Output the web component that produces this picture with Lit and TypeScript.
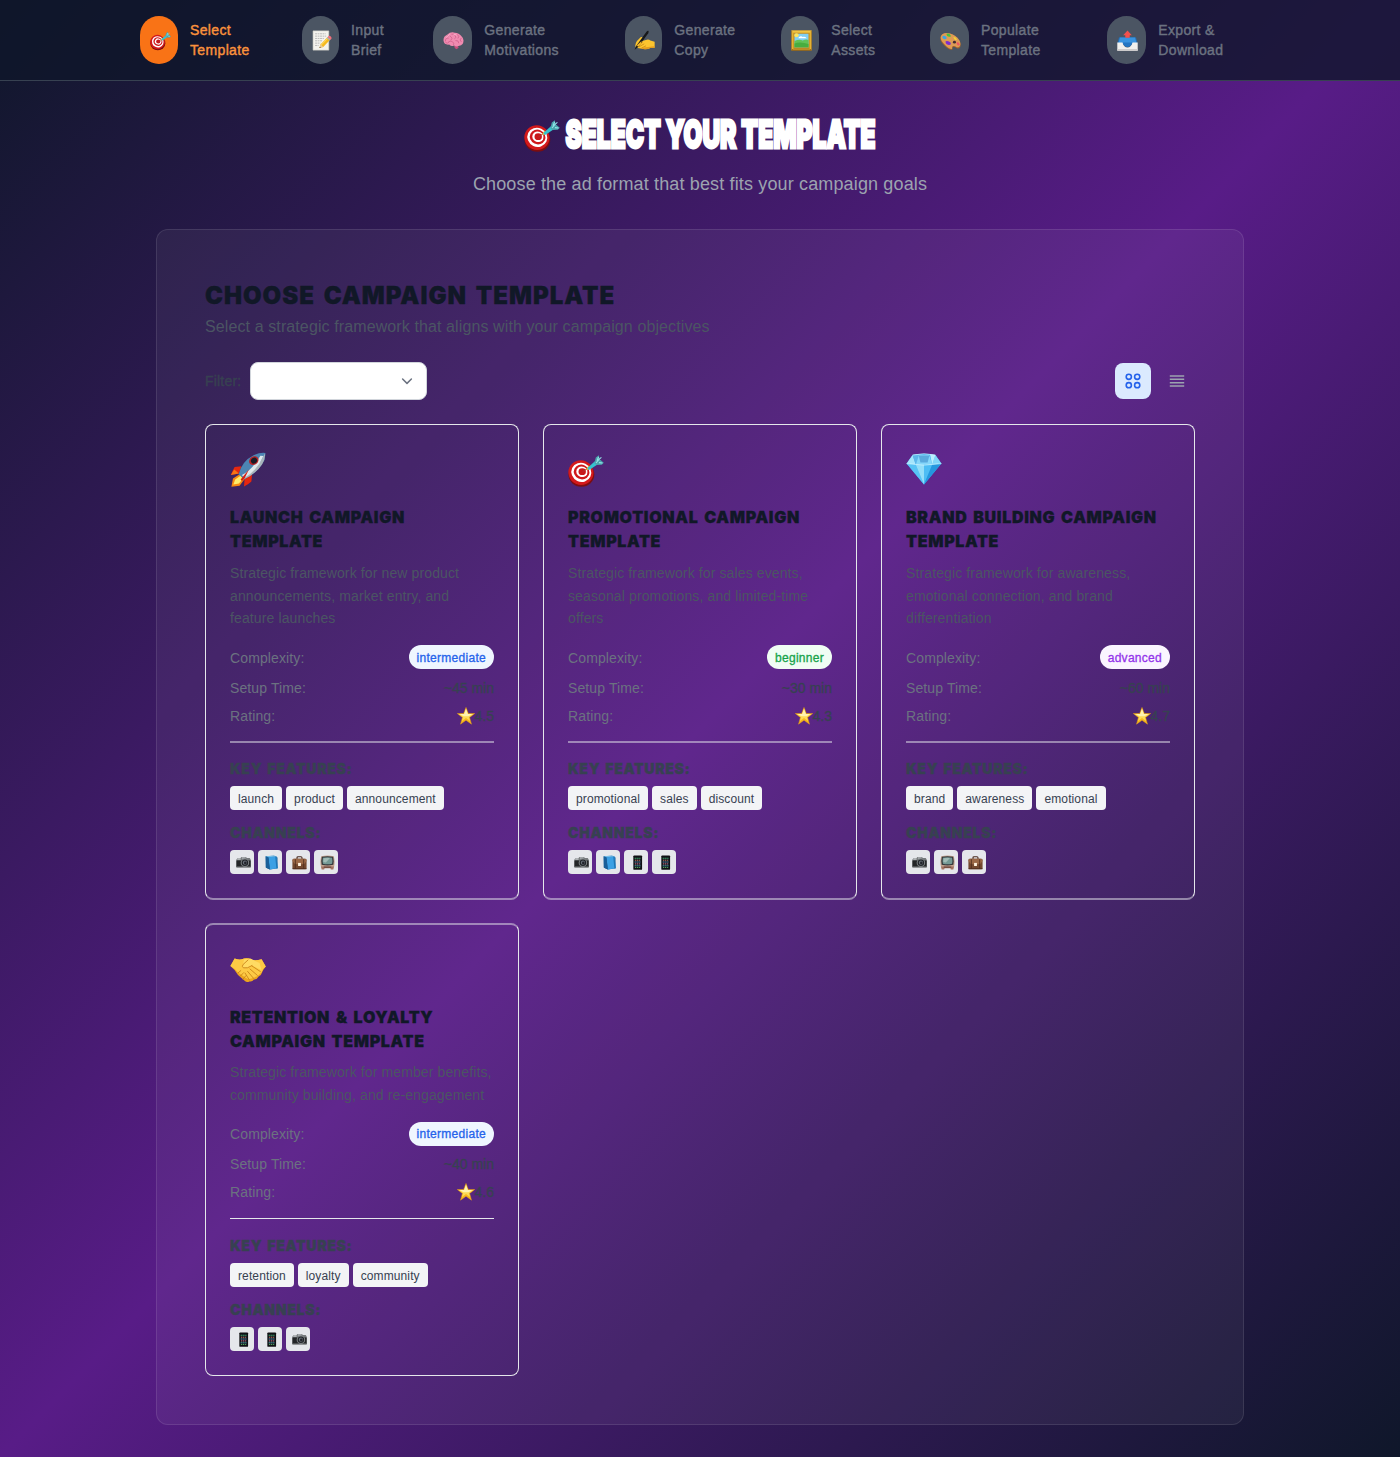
import { LitElement, html, css, svg } from "lit";
import { customElement } from "lit/decorators.js";

type Glyph = ReturnType<typeof svg>;

const EMOJI: Record<string, Glyph> = {
  target: svg`
    <ellipse cx="13.4" cy="22.6" rx="12.9" ry="12.2" fill="#7d0d10" />
    <ellipse cx="12.9" cy="20.6" rx="12.6" ry="12.2" transform="rotate(25 12.9 20.6)" fill="#d3191b" />
    <ellipse cx="13.3" cy="20.3" rx="10.1" ry="9.5" transform="rotate(25 13.3 20.3)" fill="#fff" />
    <ellipse cx="13.6" cy="20" rx="7.9" ry="7.3" transform="rotate(25 13.6 20)" fill="#cf191b" />
    <ellipse cx="13.9" cy="19.8" rx="5.7" ry="5.2" transform="rotate(25 13.9 19.8)" fill="#fff" />
    <ellipse cx="14.2" cy="19.7" rx="3.7" ry="3.4" fill="#c8181a" />
    <path d="M14.5 19.8 20 16.2" stroke="#a33" stroke-width="1" />
    <path d="M17.8 17.6 20.6 13.4 22.6 16.2 19.6 18Z" fill="#e6b93a" />
    <path d="M19.6 15.8 27.2 9 29.8 12.2 22 17.6Q19.2 18.4 19.6 15.8Z" fill="#35c3cf" />
    <path d="M26.4 11 27.8 5.4 30.8 3.2 31.6 7.2 35.8 10.8 33.8 12.8 28.6 13Z" fill="#4aa4ad" />
    <path d="M28 11 31 7.4 33.4 5.4M29 8.6 30.6 5M31 10.6 34.4 11" stroke="#95e5e8" stroke-width="1.1" fill="none" />`,
  memo: svg`
    <path d="M3.5 1.5H30.5V34.5H3.5Z" fill="#f4f3ee" stroke="#d0cec6" />
    <path d="M7 6.5H25M7 10.5H26M7 14.5H22M7 18.5H19M7 22.5H16M7 26.5H13" stroke="#a9a9ab" stroke-width="1.3" stroke-dasharray="4 1 2.5 1" />
    <path d="M14.5 31 16.6 24.6 28.6 12 33.2 16.4 21 29Z" fill="#f5b91f" />
    <path d="M17.4 26 29.6 13.4" stroke="#ffdf62" stroke-width="1.6" />
    <path d="M28 12.6 30.3 10.2Q32 9.4 34 11.3 36 13.6 35 14.8L32.8 17Z" fill="#f2707c" />
    <path d="M27 13.6 28.4 12.2 33.2 16.6 31.8 18Z" fill="#9db2bf" />
    <path d="M14.5 31 16.6 24.6 21 29Z" fill="#e8c99a" /><path d="M14.5 31 15.3 28.6 16.9 30.2Z" fill="#333" />`,
  brain: svg`
    <path d="M19 27 24 25.5 27 30.5 23 33Q19.5 32 19 27Z" fill="#c64d7b" />
    <path d="M1 19Q0 11 7 8 13 2.6 20 4.5 28 5 31 10 36.4 15 34.8 20.4 35 25.6 28 27 23 29.6 19 26.6 13 29 10.6 25 2 26 1 19Z" fill="#f08bb0" />
    <path d="M4 19Q4 13 9 14M8 10Q12 8 14 12 17 14 14 17M15 7Q20 6 21 10 24 13 20 15M25 8Q29 11 26 14M31 14Q27 17 31 20M22 18Q27 17 27 22M10 20Q14 17 17 21 20 22 18 25M5 22Q8 24 10 21" fill="none" stroke="#d2648f" stroke-width="1.5" stroke-linecap="round" />
    <path d="M6 13Q8 9 12 8M18 8Q21 7 23 9" stroke="#ffc3d8" stroke-width="1.2" fill="none" />`,
  writing: svg`
    <path d="M2 28Q2 23 5 19L11.4 12.6Q14.6 11 15.4 14L14 19 22 16.6Q26 16 28 18L35.4 20V30.6L28 31Q20 34.8 12 31.8 5 32 2 28Z" fill="#fcc52f" />
    <path d="M7 25 14 21.6M9 28.6 17 24M13 31 20 27.4" stroke="#cd8a15" stroke-width="1.4" stroke-linecap="round" />
    <path d="M28 31Q20 34.8 12 31.8L17 30 35.4 28V30.6Z" fill="#e39c1d" />
    <path d="M1 34 4.4 26.6 21 3.4Q23.4.6 24.6 1.4 25.8 2.8 24.4 5.6L7.4 29Z" fill="#17181a" />
    <path d="M5 26 13 19 12 23.4 7 29Z" fill="#f6b827" />`,
  frame: svg`
    <path d="M.5.8H35.5V35.2H.5Z" fill="#c98f1c" /><path d="M.5.8H35.5L32 4.2H4Z" fill="#f1c54a" />
    <path d="M.5 35.2H35.5L31.6 31H4.4Z" fill="#8e5c0d" />
    <path d="M3 3.4H33V32.6H3Z" fill="none" stroke="#f0c33e" stroke-width="1.6" />
    <path d="M6 6.4H30V29.6H6Z" fill="#80cff4" /><circle cx="9.5" cy="9" r="3.6" fill="#ffe45c" />
    <path d="M13 13Q17 9 20 12 24 11 27 14H13Z" fill="#fff" />
    <path d="M6 19Q14 15 20 18 26 15 30 17V29.6H6Z" fill="#62c257" />
    <path d="M6 23Q16 19 30 24V29.6H6Z" fill="#48ad3f" />`,
  palette: svg`
    <path d="M1 12Q3 5 12 5.4 23 6 30 14 37.6 22 34.6 29 32 33.4 28 31 25.4 28.4 22.6 29 20 30.6 21.4 33.4 17 36 8 27-1 19 1 12Z" fill="#a8642a" />
    <path d="M1.4 11Q3.4 4.6 12 5 23 6 30 13.4 37 21 34 27.6 32 31 28 29 25 26.4 22 27.6 20 29 21 32 16 34 8.4 25.4 0 17.6 1.4 11Z" fill="#dd9b55" />
    <ellipse cx="24.8" cy="20.8" rx="2.6" ry="2.3" fill="#3e2b35" />
    <path d="M11 6.6Q16 5 18 8.8 20 12 15.4 11.6 11 11 11 6.6Z" fill="#45c339" />
    <path d="M4.6 10.2Q9 8.6 11 12.4 12.4 16.4 8 15.8 3 14.6 4.6 10.2Z" fill="#37a5e8" />
    <path d="M9.6 19.4Q14 17.4 18 21.6 20 26.2 15 25.8 8.8 24.4 9.6 19.4Z" fill="#7c2ed0" />
    <path d="M22.8 11.6Q27 11.6 29 16.4 27.4 18.4 24.6 16Z" fill="#f5d533" />
    <path d="M28 21.4Q32 19.6 34 24.8 32 28 29.8 25.6Z" fill="#ef5464" />`,
  outbox: svg`
    <path d="M3.5 12.5H32.5L35.5 23H.5Z" fill="#266cae" />
    <path d="M5 13H31L33.6 23.4H2.4Z" fill="#3a93df" />
    <path d="M.5 21.4H9.6Q12 30 18 30T26.4 21.4H35.5V35.4H.5Z" fill="#f1f0ee" />
    <path d="M.5 32.6H35.5V35.4H.5Z" fill="#cfcccb" />
    <path d="M9.6 21.4H26.4Q24.6 29 18 29T9.6 21.4Z" fill="#2476c4" />
    <path d="M18 .8 25.4 9H21.8V13.4H14.2V9H10.6Z" fill="#f4514d" />`,
  rocket: svg`
    <path d="M11.4 14.2 4.6 15Q2.6 18.6.8 23L9 21.6Z" fill="#e5270f" />
    <path d="M22 22.6 21.4 29.4Q18 32.6 14 34.6L14.6 27Z" fill="#e5270f" />
    <path d="M.8 23 4.2 17.4 9 21.6Z" fill="#fb8a17" opacity=".8" />
    <path d="M10 22 3 26.6 1.4 34.8 9.6 33.8 14.6 27Z" fill="#f78b12" />
    <path d="M10.8 23.4 5.2 27.4 3.4 32.6 9 31.4 13 26.6Z" fill="#ffed6b" />
    <path d="M8.6 22.2Q12 9 23.6 3.2 30.4.2 35.4 1 35.8 7 32 12.6 25.6 22.2 14 27.2Z" fill="#4c85b4" />
    <path d="M14.2 24.8Q28 16.4 34.8 1.4 35.6 7 32 12.6 25.6 22.2 14 27.2Z" fill="#a9b4bb" />
    <path d="M12 23Q22 18 30.4 3.8L33.4 4Q27 19 14 26Z" fill="#e0e9ec" />
    <ellipse cx="23.8" cy="8.6" rx="5" ry="4" transform="rotate(-35 23.8 8.6)" fill="#b52226" />
    <ellipse cx="24" cy="8.6" rx="3.2" ry="2.8" transform="rotate(-35 24 8.6)" fill="#181b27" />
    <path d="M10.6 27.4 19 17.2 14.8 26 12 29Z" fill="#d02118" />`,
  diamond: svg`
    <path d="M.6 11.6 6.6 3Q18 .6 29.4 3L35.4 11.6 18 32.4Z" fill="#3fb0ee" />
    <path d="M.6 11.6 6.6 3 9.8 12.8Z" fill="#a6e5fb" /><path d="M6.6 3Q11 1.8 14 2L9.8 12.8Z" fill="#5db7ea" />
    <path d="M9.8 12.8 13 3 23.2 3 26.2 12.8Z" fill="#86d7fa" />
    <path d="M12.8 3.6H23.4L21.6 10.4H14.4Z" fill="#5aaadd" />
    <path d="M29.4 3 35.4 11.6 26.2 12.8Z" fill="#80d6f9" /><path d="M24 2.2 29.4 3 26.2 12.8Z" fill="#b9effe" />
    <path d="M.6 11.6 9.8 12.8 18 32.4Z" fill="#58c4f5" /><path d="M9.8 12.8H18V32.4Z" fill="#93def9" />
    <path d="M18 12.8H26.2L18 32.4Z" fill="#4dbdf4" /><path d="M26.2 12.8 35.4 11.6 18 32.4Z" fill="#2497df" />
    <path d="M.6 11.6Q18 14.6 35.4 11.6M6.6 3Q18 .6 29.4 3" fill="none" stroke="#d3f6ff" stroke-width=".7" />`,
  handshake: svg`
    <path d="M.4 15 4.6 7.6Q10 9.8 14 7.6 18 6.6 21 8.4 25 10.2 31.6 8.2L35.8 15.4Q33 18.6 31.8 22 31 25 28.6 25.6 27 28.8 24 28.6 22 31.2 19.4 30.4 17 32 14.6 29.8L8 24Q5 18.6.4 15Z" fill="#eda51e" />
    <path d="M.4 15 4.6 7.6Q10 9.6 14 7.6 18 6.6 21 8.4 25 10.2 31.6 8.2L35.8 15.4Q32.6 17.6 31.4 21.4 28 25.6 24 26.6 19 29 16 27L8 21.6Q5 17.6.4 15Z" fill="#fdca45" />
    <path d="M14 8.6 20.4 7.6Q27 11 29.6 12L31.4 19 22 14.6Q17 18 13.4 16.8 11.6 15.6 13 13.6Z" fill="#ffdb63" />
    <path d="M22 14.6Q17 18 13.4 16.8 11.6 15.6 13 13.6L18 9M22 15 30.4 20.6M20 18 27.4 24.4M17.6 20.4 23.6 27.4M15 22 19.4 29M8 22 10.8 19.6M10.4 25 13.4 22M13 28 16 24.6" fill="none" stroke="#c98518" stroke-width=".9" stroke-linecap="round" />`,
  star: svg`
    <path d="M18 .8 22.6 13H35.4L25.2 20.8 29 34.4 18 26.4 7 34.4 10.8 20.8.6 13H13.4Z" fill="#f8b91c" stroke="#e09a1c" stroke-width="1" stroke-linejoin="round" />
    <path d="M18 3 22 14H33L24 20.4 26 28 18 22 10 28 12 20.4 3 14H14Z" fill="#fddc55" />
    <path d="M18 4 21.6 14H31L23 18.6 13 18.6 5 14H14.4Z" fill="#fff3b0" />`,
  camera: svg`
    <path d="M1 11 4 7.4H11L13 4.6H24L26 7.4H33L35.2 11V29H1Z" fill="#767a7c" />
    <path d="M1 13H35.2V29H1Z" fill="#232527" /><path d="M3 7.4H11V12H3ZM14 5.6H23V9H14Z" fill="#b0b4b6" />
    <path d="M1 27.6H35.2V30.6H1Z" fill="#7c8082" />
    <circle cx="21.4" cy="18.4" r="10.2" fill="#7e8385" /><circle cx="21.4" cy="18.4" r="7.8" fill="#212428" />
    <circle cx="21.4" cy="18.4" r="5" fill="#69717a" /><circle cx="22.4" cy="19" r="3.2" fill="#22242b" />`,
  book: svg`
    <path d="M4 3 24 1.6 32.4 6V31.6L14 35 4 30Z" fill="#145e99" />
    <path d="M10.6 5.6 30 3.4 33 31.6 14 35Z" fill="#3ba0e4" /><path d="M4 3 10.6 5.6 14 35 5 30.6Z" fill="#1a5f99" />
    <path d="M4 3 24 1.2 30 3.4 10.6 5.6Z" fill="#75bee9" /><path d="M27 3.8 30 3.4 33 31.6 29.6 32.2Z" fill="#1e76b6" />`,
  briefcase: svg`
    <path d="M12 12V6.4Q12 4 14.4 4H21.6Q24 4 24 6.4V12" fill="none" stroke="#4a2c20" stroke-width="2.6" />
    <rect x="1" y="9" width="34" height="25" rx="3" fill="#74492f" />
    <path d="M1 14Q1 9 6 9H30Q35 9 35 14L30 21Q18 24 6 21Z" fill="#9a6846" />
    <path d="M8 10V33M28 10V33" stroke="#4d2c1d" stroke-width="2" /><rect x="14.6" y="19" width="6.8" height="7.4" fill="#fff1dd" />
    <path d="M1 32H35V34H1Z" fill="#4a2b1d" />`,
  tv: svg`
    <path d="M3 3Q18-.6 33 3 36.6 15 34 27H2Q-.6 15 3 3Z" fill="#c5a38e" />
    <path d="M2 27H34L32 35H26L25 32H11L10 35H4Z" fill="#a57460" />
    <path d="M4.4 4Q18 1.6 31.6 4 34 14 32 23.6 18 27 4 23.6 2 14 4.4 4Z" fill="#34383c" />
    <path d="M7 6.4Q18 4.4 29 6.4 30.6 14 29 21 18 23.4 7 21 5.4 14 7 6.4Z" fill="#749994" />
    <path d="M8.6 8Q16 6.4 24 7.4L14 18 8 17Z" fill="#a1bbb6" /><path d="M9 29H27" stroke="#4b2d25" stroke-width="2" />`,
  phone: svg`
    <rect x="8" y="1" width="21" height="34.4" rx="2" fill="#101114" />
    <path d="M11 6H26V31H11Z" fill="#17242d" />
    <g stroke-width="2.6" fill="none" stroke-dasharray="2.6 2">
      <path d="M11.4 8H26" stroke="#37995a" /><path d="M12 12.4H26" stroke="#c86745" />
      <path d="M11.4 16.8H26" stroke="#6b8eb8" /><path d="M12 21.2H26" stroke="#b65668" />
      <path d="M11.4 25.6H26" stroke="#50a9ae" /><path d="M12 30H26" stroke="#55a653" />
    </g>`,
};

const emoji = (name: string, size: number) =>
  html`<svg class="emoji" width=${size} height=${size} viewBox="0 0 36 36" aria-hidden="true">${EMOJI[name]}</svg>`;

const STEPS = [
  { icon: "target", lines: ["Select", "Template"], width: 38, active: true },
  { icon: "memo", lines: ["Input", "Brief"], width: 37.5 },
  { icon: "brain", lines: ["Generate", "Motivations"], width: 39 },
  { icon: "writing", lines: ["Generate", "Copy"], width: 37.5 },
  { icon: "frame", lines: ["Select", "Assets"], width: 38 },
  { icon: "palette", lines: ["Populate", "Template"], width: 38.7 },
  { icon: "outbox", lines: ["Export &", "Download"], width: 39.5 },
];

interface Template {
  icon: string;
  title: string[];
  desc: string[];
  level: string;
  time: string;
  rating: string;
  tags: string[];
  channels: string[];
}

const TEMPLATES: Template[] = [
  {
    icon: "rocket",
    title: ["Launch Campaign", "Template"],
    desc: ["Strategic framework for new product", "announcements, market entry, and", "feature launches"],
    level: "intermediate", time: "~45 min", rating: "4.5",
    tags: ["launch", "product", "announcement"],
    channels: ["camera", "book", "briefcase", "tv"],
  },
  {
    icon: "target",
    title: ["Promotional Campaign", "Template"],
    desc: ["Strategic framework for sales events,", "seasonal promotions, and limited-time", "offers"],
    level: "beginner", time: "~30 min", rating: "4.3",
    tags: ["promotional", "sales", "discount"],
    channels: ["camera", "book", "phone", "phone"],
  },
  {
    icon: "diamond",
    title: ["Brand Building Campaign", "Template"],
    desc: ["Strategic framework for awareness,", "emotional connection, and brand", "differentiation"],
    level: "advanced", time: "~60 min", rating: "4.7",
    tags: ["brand", "awareness", "emotional"],
    channels: ["camera", "tv", "briefcase"],
  },
  {
    icon: "handshake",
    title: ["Retention & Loyalty", "Campaign Template"],
    desc: ["Strategic framework for member benefits,", "community building, and re-engagement"],
    level: "intermediate", time: "~40 min", rating: "4.6",
    tags: ["retention", "loyalty", "community"],
    channels: ["phone", "phone", "camera"],
  },
];

const lines = (parts: string[]) => parts.map((p, i) => (i ? html`<br />${p}` : p));

@customElement("app-root")
export class AppRoot extends LitElement {
  static styles = css`
    :host {
      display: block;
      min-height: 1457px;
      box-sizing: border-box;
      font-family: "Liberation Sans", Arial, sans-serif;
      font-size: 14px;
      line-height: 20px;
      background: linear-gradient(to bottom right, #0f172a, #581c87, #0f172a);
    }
    * { box-sizing: border-box; }
    h1, h2, h3, h4, p { margin: 0; }
    .emoji { display: block; flex: none; }
    nav {
      height: 81px;
      padding: 16px 0 0 140px;
      background: rgba(15, 23, 42, 0.8);
      border-bottom: 1px solid #374151;
      display: grid;
      grid-template-columns: 161.5px 131.8px 191.5px 156.5px 149px 176.5px 1fr;
    }
    .step { display: flex; gap: 12px; color: #6b7280; }
    .pill {
      height: 48px;
      padding: 1px 0 0 2px;
      border-radius: 20px;
      background: #4b5563;
      display: flex;
      align-items: center;
      justify-content: center;
    }
    .label { padding-top: 4px; letter-spacing: 0.35px; -webkit-text-stroke: 0.4px currentColor; }
    .active { color: #fb923c; }
    .active .pill { background: #f97316; }
    main { padding: 32px 156px; }
    h1 {
      height: 40px;
      display: flex;
      justify-content: center;
      align-items: center;
      gap: 5px;
      color: #fff;
    }
    h1 .emoji { margin-top: 3px; }
    .headline { width: 311px; height: 40px; display: block; overflow: visible; }
    .headline text {
      font: 900 38.5px Inter, sans-serif;
      fill: #fff;
      stroke: #fff;
      stroke-width: 2.8px;
    }
    .lead {
      margin: 16px 0 32px;
      height: 28px;
      text-align: center;
      font-size: 18px;
      line-height: 30px;
      letter-spacing: 0.145px;
      color: #9ca3af;
    }
    .panel {
      padding: 48px;
      border: 1px solid rgba(255, 255, 255, 0.1);
      border-radius: 12px;
      background: rgba(255, 255, 255, 0.05);
    }
    h2, h3, h4 {
      font-family: Inter, sans-serif;
      font-weight: 900;
      text-transform: uppercase;
      -webkit-text-stroke: 0.3px currentColor;
    }
    h2 { font-size: 24px; line-height: 35px; height: 32px; color: #111827; letter-spacing: 1px; word-spacing: 3px; }
    .sub { margin-top: 4px; font-size: 16px; height: 24px; line-height: 26px; letter-spacing: 0.107px; color: #4b5563; }
    .tools { height: 38px; margin: 24px 0; display: flex; align-items: center; }
    .filter { color: #374151; -webkit-text-stroke: 0.4px currentColor; width: 44.5px; letter-spacing: 0.2px; }
    .select {
      width: 177px;
      height: 38px;
      padding-right: 12px;
      border: 1px solid #d1d5db;
      border-radius: 8px;
      background: #fff;
      display: flex;
      align-items: center;
      justify-content: flex-end;
      margin-right: auto;
    }
    .toggle { width: 36px; height: 36px; margin-left: 8px; border-radius: 8px; display: grid; place-items: center; }
    .on { background: #dbeafe; }
    .grid { display: grid; grid-template-columns: repeat(3, 1fr); gap: 23px 24px; align-items: start; }
    .card { border: 1px solid #e5e7eb; border-radius: 8px; padding: 24px; }
    .card:not(:last-child) { border-bottom: 2px solid rgba(229, 231, 235, 0.5); }
    .card:last-child { border-top: 2px solid rgba(229, 231, 235, 0.5); padding-top: 23px; }
    .art { height: 56px; padding-top: 3px; }
    h3 {
      font-size: 16px;
      line-height: 24px;
      color: #111827;
      white-space: nowrap;
      letter-spacing: 0.68px;
      word-spacing: 2px;
    }
    .card:last-child h3 { padding-top: 1px; margin-bottom: -1px; }
    .desc { margin: 8px 0 15.75px; padding-top: 1px; line-height: 22.5px; letter-spacing: 0.12px; color: #4b5563; white-space: nowrap; }
    .row {
      min-height: 20px;
      display: flex;
      justify-content: space-between;
      align-items: center;
      margin-top: 8px;
      color: #6b7280;
      letter-spacing: 0.12px;
    }
    .row span { line-height: 22px; margin-bottom: -2px; }
    .card:last-child .row span { line-height: 20px; margin-bottom: 0; }
    .row .value { color: #374151; display: flex; align-items: center; letter-spacing: 0; -webkit-text-stroke: 0.3px currentColor; }
    .value .emoji { margin-top: -1px; }
    .row .badge, .card:last-child .row .badge {
      height: 24px;
      margin: 0;
      padding: 0 8px;
      border-radius: 12px;
      font-size: 12px;
      line-height: 26px;
      letter-spacing: 0.28px;
      -webkit-text-stroke: 0.3px currentColor;
    }
    .card:last-child .row .badge { line-height: 25px; }
    .intermediate { background: #eff6ff; color: #2563eb; }
    .beginner { background: #f0fdf4; color: #16a34a; }
    .advanced { background: #faf5ff; color: #9333ea; }
    .rule { height: 2px; margin: 16px 0 15px; background: rgba(229, 231, 235, 0.5); }
    .card:last-child .rule { height: 1px; margin-bottom: 16px; background: #e5e7eb; }
    h4 { font-size: 14px; height: 20px; line-height: 22px; color: #374151; letter-spacing: 0.72px; word-spacing: 1.5px; }
    .tags { display: flex; gap: 4px; margin: 8px 0 12px; }
    .tag {
      height: 24px;
      padding: 0 8px;
      border-radius: 4px;
      background: #f3f4f6;
      color: #374151;
      font-size: 12px;
      line-height: 26px;
      letter-spacing: 0.12px;
    }
    .channels { display: flex; gap: 4px; margin-top: 8px; }
    .channel {
      width: 24px;
      height: 24px;
      padding: 1px 0 0 3px;
      border-radius: 4px;
      background: #e5e7eb;
      display: grid;
      place-items: center;
    }
  `;

  private card(t: Template) {
    return html`<article class="card">
      <div class="art">${emoji(t.icon, 36)}</div>
      <h3>${lines(t.title)}</h3>
      <p class="desc">${lines(t.desc)}</p>
      <div class="row"><span>Complexity:</span><span class="badge ${t.level}">${t.level}</span></div>
      <div class="row"><span>Setup Time:</span><span class="value">${t.time}</span></div>
      <div class="row"><span>Rating:</span><span class="value">${emoji("star", 18)}${t.rating}</span></div>
      <div class="rule"></div>
      <h4>Key Features:</h4>
      <div class="tags">${t.tags.map((x) => html`<span class="tag">${x}</span>`)}</div>
      <h4>Channels:</h4>
      <div class="channels">${t.channels.map((c) => html`<span class="channel">${emoji(c, 15)}</span>`)}</div>
    </article>`;
  }

  render() {
    return html`
      <nav>
        ${STEPS.map(
          (s) => html`<div class="step ${s.active ? "active" : ""}">
            <span class="pill" style="width:${s.width}px">${emoji(s.icon, 21)}</span>
            <span class="label">${lines(s.lines)}</span>
          </div>`
        )}
      </nav>
      <main>
        <h1>
          ${emoji("target", 36)}
          <svg class="headline" viewBox="0 0 311 40">
            <text x="0.5" y="34.6" textLength="310" lengthAdjust="spacingAndGlyphs">SELECT YOUR TEMPLATE</text>
          </svg>
        </h1>
        <p class="lead">Choose the ad format that best fits your campaign goals</p>
        <section class="panel">
          <h2>Choose Campaign Template</h2>
          <p class="sub">Select a strategic framework that aligns with your campaign objectives</p>
          <div class="tools">
            <span class="filter">Filter:</span>
            <span class="select">
              <svg width="14" height="14" viewBox="0 0 14 14" fill="none" stroke="#6b7280" stroke-width="1.5" stroke-linecap="round" stroke-linejoin="round"><path d="M2.6 5 7 9.4 11.4 5" /></svg>
            </span>
            <span class="toggle on">
              <svg width="16" height="16" viewBox="0 0 16 16" fill="none" stroke="#2563eb" stroke-width="1.6">
                <circle cx="3.8" cy="3.8" r="2.6" /><circle cx="12.2" cy="3.8" r="2.6" />
                <circle cx="3.8" cy="12.2" r="2.6" /><circle cx="12.2" cy="12.2" r="2.6" />
              </svg>
            </span>
            <span class="toggle">
              <svg width="16" height="16" viewBox="0 0 16 16" stroke="#9ca3af" stroke-width="1.6"><path d="M.8 3H15.2M.8 6.3H15.2M.8 9.7H15.2M.8 13H15.2" /></svg>
            </span>
          </div>
          <div class="grid">${TEMPLATES.map((t) => this.card(t))}</div>
        </section>
      </main>
    `;
  }
}
